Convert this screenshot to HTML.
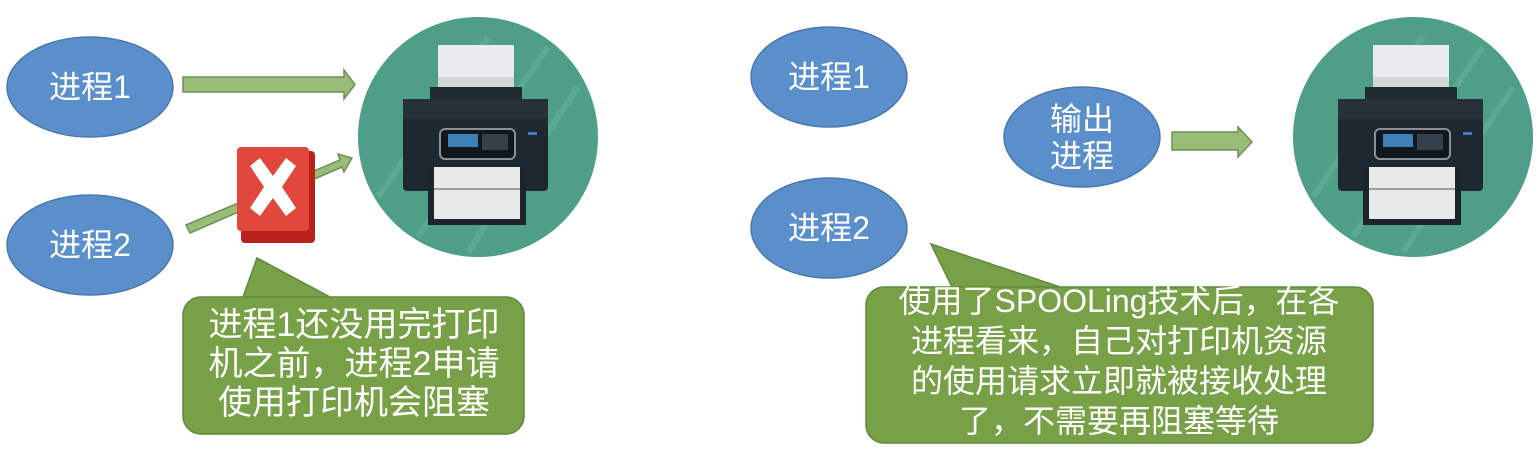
<!DOCTYPE html>
<html><head><meta charset="utf-8"><style>
html,body{margin:0;padding:0;background:#fff;width:1537px;height:454px;overflow:hidden}
svg text{font-family:"Liberation Sans","Noto Sans CJK SC",sans-serif;fill:#fff}
</style></head><body>
<svg width="1537" height="454" viewBox="0 0 1537 454">
<defs>
<g id="printer">
<circle r="120" fill="#4e9e88"/>
<g stroke="#6fb4a0" stroke-width="6" opacity="0.5">
<line x1="-100" y1="60" x2="10" y2="-100"/><line x1="-60" y1="100" x2="70" y2="-90"/><line x1="-10" y1="115" x2="100" y2="-50"/>
</g>
<rect x="-40" y="-92" width="76" height="52" fill="#e9ecec"/>
<rect x="-40" y="-60" width="76" height="20" fill="#d3d6d6"/>
<rect x="-48" y="-50" width="92" height="14" fill="#202a31"/>
<rect x="-75" y="-38" width="145" height="92" rx="4" fill="#1e2830"/>
<rect x="-75" y="-38" width="145" height="20" fill="#263139"/>
<rect x="-38" y="-8" width="75" height="30" rx="5" fill="#11181d" stroke="#8a9096" stroke-width="2"/>
<rect x="-30" y="-3" width="30" height="13" fill="#3f7fb8"/>
<rect x="4" y="-3" width="26" height="16" fill="#34414b"/>
<rect x="50" y="-5" width="9" height="3" fill="#3f7fb8"/>
<rect x="-50" y="30" width="98" height="58" fill="#1c252c"/>
<rect x="-44" y="30" width="86" height="52" fill="#e8eaea"/>
<line x1="-44" y1="52" x2="42" y2="52" stroke="#9aa0a2" stroke-width="2"/>
</g>
</defs>
<!-- left -->
<ellipse cx="90" cy="87" rx="83" ry="50" fill="#5a8fcb" stroke="#4a78ad" stroke-width="1.5"/>
<text x="90" y="98" font-size="32" text-anchor="middle">进程1</text>
<ellipse cx="90" cy="245" rx="83" ry="50" fill="#5a8fcb" stroke="#4a78ad" stroke-width="1.5"/>
<text x="90" y="256" font-size="32" text-anchor="middle">进程2</text>
<path d="M183 77H344V70L355 84.5L344 99V92H183Z" fill="#97bd76" stroke="#6e8f58" stroke-width="1.5"/>
<path d="M186 225L340 160L338 154L352 158L344 172L342 167L190 233Z" fill="#97bd76" stroke="#6e8f58" stroke-width="1.5"/>
<use href="#printer" x="478" y="137"/>
<rect x="241" y="151" width="74" height="92" rx="4" fill="#b8221a"/>
<rect x="237" y="147" width="72" height="84" rx="4" fill="#e2473c"/>
<path d="M250 166L260 158L273 176L286 158L296 166L282 187L296 208L286 216L273 198L260 216L250 208L264 187Z" fill="#fff"/>
<path d="M257 258L243 297H507A18 18 0 0 1 524 315V416A18 18 0 0 1 507 434H200A18 18 0 0 1 183 416V315A18 18 0 0 1 200 297H330Z" fill="#77a047" stroke="#5f8a3c" stroke-width="1.5"/>
<text x="354" y="336" font-size="34" text-anchor="middle">进程1还没用完打印</text>
<text x="354" y="375" font-size="34" text-anchor="middle">机之前，进程2申请</text>
<text x="354" y="414" font-size="34" text-anchor="middle">使用打印机会阻塞</text>
<!-- right -->
<ellipse cx="829" cy="77" rx="78" ry="50" fill="#5a8fcb" stroke="#4a78ad" stroke-width="1.5"/>
<text x="829" y="88" font-size="32" text-anchor="middle">进程1</text>
<ellipse cx="829" cy="228" rx="78" ry="50" fill="#5a8fcb" stroke="#4a78ad" stroke-width="1.5"/>
<text x="829" y="239" font-size="32" text-anchor="middle">进程2</text>
<ellipse cx="1082" cy="137" rx="78" ry="50" fill="#5a8fcb" stroke="#4a78ad" stroke-width="1.5"/>
<text x="1082" y="130" font-size="32" text-anchor="middle">输出</text>
<text x="1082" y="167" font-size="32" text-anchor="middle">进程</text>
<path d="M1172 132H1238V127L1252 142L1238 157V150H1172Z" fill="#97bd76" stroke="#6e8f58" stroke-width="1.5"/>
<use href="#printer" x="1413" y="137"/>
<path d="M931 244L952 287H1355A18 18 0 0 1 1373 305V425A18 18 0 0 1 1355 443H884A18 18 0 0 1 866 425V305A18 18 0 0 1 884 287H1060Z" fill="#77a047" stroke="#5f8a3c" stroke-width="1.5"/>
<text x="1119" y="312" font-size="32" text-anchor="middle">使用了SPOOLing技术后，在各</text>
<text x="1119" y="352" font-size="32" text-anchor="middle">进程看来，自己对打印机资源</text>
<text x="1119" y="392" font-size="32" text-anchor="middle">的使用请求立即就被接收处理</text>
<text x="1119" y="432" font-size="32" text-anchor="middle">了，不需要再阻塞等待</text>
</svg>
</body></html>
